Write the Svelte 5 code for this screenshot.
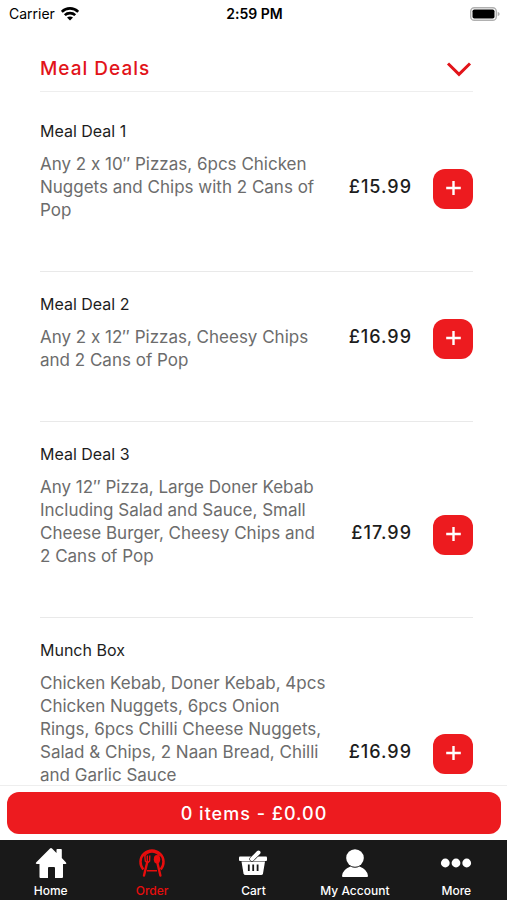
<script>
  const items = [
    { name: 'Meal Deal 1', text: 'Any 2 x 10″ Pizzas, 6pcs Chicken\nNuggets and Chips with 2 Cans of\nPop', price: 15.99 },
    { name: 'Meal Deal 2', text: 'Any 2 x 12″ Pizzas, Cheesy Chips\nand 2 Cans of Pop', price: 16.99 },
    { name: 'Meal Deal 3', text: 'Any 12″ Pizza, Large Doner Kebab\nIncluding Salad and Sauce, Small\nCheese Burger, Cheesy Chips and\n2 Cans of Pop', price: 17.99 },
    { name: 'Munch Box', text: 'Chicken Kebab, Doner Kebab, 4pcs\nChicken Nuggets, 6pcs Onion\nRings, 6pcs Chilli Cheese Nuggets,\nSalad & Chips, 2 Naan Bread, Chilli\nand Garlic Sauce', price: 16.99 }
  ];
  const tabs = ['Home', 'Order', 'Cart', 'My Account', 'More'];
  const current = 'Order';
</script>

<div class="screen">
  <header class="status">
    <span class="carrier">
      Carrier
      <svg width="18" height="14" viewBox="0 0 18 14" aria-hidden="true">
        <path d="M.8 4.700C5.300 .3 12.700 .3 17.200 4.700M3.800 8.200C6.600 5.400 11.400 5.400 14.200 8.200" fill="none" stroke="#000" stroke-width="2.600" />
        <path d="M9 13.500L6 10.600C7.700 9 10.300 9 12 10.600Z" fill="#000" />
      </svg>
    </span>
    <span class="time">2:59 PM</span>
    <svg class="battery" width="30" height="14" viewBox="0 0 30 14" aria-hidden="true">
      <rect x=".7" y=".7" width="25.600" height="12.600" rx="3.600" fill="#fff" stroke="#b0b0b0" stroke-width="1.400" />
      <rect x="2.500" y="2.500" width="22" height="9" rx="1.800" fill="#000" />
      <path d="M27.700 4.700Q29.700 5.500 29.700 7T27.700 9.300Z" fill="#b0b0b0" />
    </svg>
  </header>

  <main>
    <h1>
      <button class="category" aria-expanded="true">
        Meal Deals
        <svg width="26" height="16" viewBox="0 0 26 16" aria-hidden="true">
          <path d="M2 2.500L13 13.300L24 2.500" fill="none" stroke="#e2141a" stroke-width="3" />
        </svg>
      </button>
    </h1>
    <ul>
      {#each items as item}
        <li>
          <div class="info">
            <h2>{item.name}</h2>
            <p>{item.text}</p>
          </div>
          <div class="buy">
            <span class="price">£{item.price}</span>
            <button class="add" aria-label="Add {item.name}">
              <svg width="16" height="16" viewBox="0 0 16 16" aria-hidden="true">
                <path d="M8.500 0V14M1.200 7H15.800" stroke="#fff" stroke-width="2.400" />
              </svg>
            </button>
          </div>
        </li>
      {/each}
    </ul>
  </main>

  <div class="basket">
    <button class="total">0 items - £0.00</button>
  </div>

  <nav>
    {#each tabs as tab}
      <a href="#{tab.toLowerCase().replace(' ', '-')}" class:active={tab === current}>
        <svg width="34" height="32" viewBox="0 0 34 32" fill="currentColor" aria-hidden="true">
          {#if tab === 'Home'}
            <path d="M16 1.500Q17 .5 18 1.500L22.500 6V2.800Q22.500 2 23.300 2H27Q27.800 2 27.800 2.800V11L32 15.500Q33 17 31.500 17H29V30Q29 31 28 31H21V21Q21 20 20 20H15Q14 20 14 21V31H6.500Q5.500 31 5.500 30V17H3Q1 16.800 2.300 15.300Z" />
          {:else if tab === 'Order'}
            <path d="M8.300 22.500A11.500 11.500 0 1 1 25.700 22.500" fill="none" stroke="currentColor" stroke-width="2.500" />
            <path d="M9.500 9A9 9 0 0 1 24.500 9M12 23.700H22" fill="none" stroke="currentColor" stroke-width="1.600" />
            <ellipse cx="22" cy="12.300" rx="3.200" ry="4.200" />
            <path d="M22.200 15L25.400 28.500" fill="none" stroke="currentColor" stroke-width="2.400" stroke-linecap="round" />
            <path d="M9.800 8.500L10.300 14Q12.300 17 14.600 14L14.800 8.500M12.300 8.500V15" fill="none" stroke="currentColor" stroke-width="1.400" />
            <path d="M12.300 15L9 28.500" fill="none" stroke="currentColor" stroke-width="2.400" stroke-linecap="round" />
          {:else if tab === 'Cart'}
            <path d="M4 9.500H30Q31 9.500 31 10.500V13Q31 14 30 14H4Q3 14 3 13V10.500Q3 9.500 4 9.500Z" />
            <path d="M5.500 14.600H29L27 26.500Q26.700 28 25 28H9.500Q8 28 7.500 26.500Z" />
            <path d="M16 12L22.500 5.500" stroke="#191919" stroke-width="5.200" stroke-linecap="round" />
            <path d="M16 12L22.500 5.500" stroke="currentColor" stroke-width="4" stroke-linecap="round" />
            <path d="M12.800 17.500V24M17.200 17.500V24M21.600 17.500V24" stroke="#191919" stroke-width="1.800" />
          {:else if tab === 'My Account'}
            <circle cx="17" cy="11" r="8.800" />
            <path d="M4 29Q4.500 22.500 12.500 19.500Q17 22 21.500 19.500Q29.500 22.500 30 29Q30 30 29 30H5Q4 30 4 29Z" />
          {:else}
            <circle cx="6.300" cy="16" r="4.400" />
            <circle cx="17" cy="16" r="4.400" />
            <circle cx="27.700" cy="16" r="4.400" />
          {/if}
        </svg>
        <span>{tab}</span>
      </a>
    {/each}
  </nav>
</div>

<style>
  :global(body) {
    margin: 0;
  }

  .screen {
    display: flex;
    flex-direction: column;
    height: 100vh;
    background: #fff;
    color: #1d1d1d;
    font-family: Inter, 'Open Sans', sans-serif;
    font-feature-settings: 'calt' 0;
  }

  button {
    border: 0;
    padding: 0;
    font: inherit;
    cursor: pointer;
  }

  h1,
  h2,
  p,
  ul {
    margin: 0;
    padding: 0;
    font-weight: 400;
  }

  .status {
    display: grid;
    grid-template-columns: 1fr auto 1fr;
    align-items: center;
    flex: none;
    height: 27px;
    padding: 0 7px 0 9px;
    font-size: 14px;
    color: #000;
  }

  .carrier {
    display: flex;
    align-items: center;
    gap: 6px;
  }

  .time {
    font-weight: 600;
  }

  .battery {
    justify-self: end;
  }

  main {
    flex: 1;
    min-height: 0;
    overflow-y: auto;
    scrollbar-width: none;
    padding: 19px 34px 0 40px;
  }

  .category {
    display: flex;
    align-items: center;
    justify-content: space-between;
    width: 100%;
    height: 46px;
    padding-right: 1px;
    border-bottom: 1px solid #eee;
    background: none;
    color: #e2141a;
    font-size: 19px;
    font-weight: 500;
    letter-spacing: 1px;
  }

  ul {
    list-style: none;
    padding-top: 7px;
  }

  li {
    display: flex;
    align-items: flex-end;
    justify-content: space-between;
    padding: 21px 0 49px;
    border-bottom: 1px solid #e9e9e9;
  }

  .info {
    display: grid;
    gap: 10px;
  }

  h2 {
    font-size: 16px;
    line-height: 23px;
  }

  p {
    color: #6c6c6c;
    font-size: 17px;
    line-height: 23px;
    white-space: pre-line;
  }

  .buy {
    display: flex;
    align-items: flex-start;
    gap: 21px;
    margin-bottom: 13px;
  }

  .price {
    font-size: 18px;
    font-weight: 500;
    line-height: 36px;
    letter-spacing: 1px;
  }

  .add {
    display: grid;
    place-items: center;
    width: 40px;
    height: 40px;
    border-radius: 12px;
    background: #ed1b1f;
  }

  .basket {
    flex: none;
    padding: 6px 6px 6px 7px;
    border-top: 1px solid #eee;
  }

  .total {
    display: block;
    width: 100%;
    height: 42px;
    border-radius: 12px;
    background: #ed1b1f;
    color: #fff;
    font-size: 18px;
    font-weight: 500;
    letter-spacing: 1px;
  }

  nav {
    display: grid;
    grid-template-columns: repeat(5, 1fr);
    flex: none;
    height: 60px;
    background: #191919;
  }

  nav a {
    display: flex;
    flex-direction: column;
    align-items: center;
    gap: 4px;
    padding-top: 7px;
    color: #fff;
    font-size: 12px;
    font-weight: 500;
    line-height: 16px;
    text-decoration: none;
  }

  nav a.active {
    color: #e80d0d;
  }
</style>
